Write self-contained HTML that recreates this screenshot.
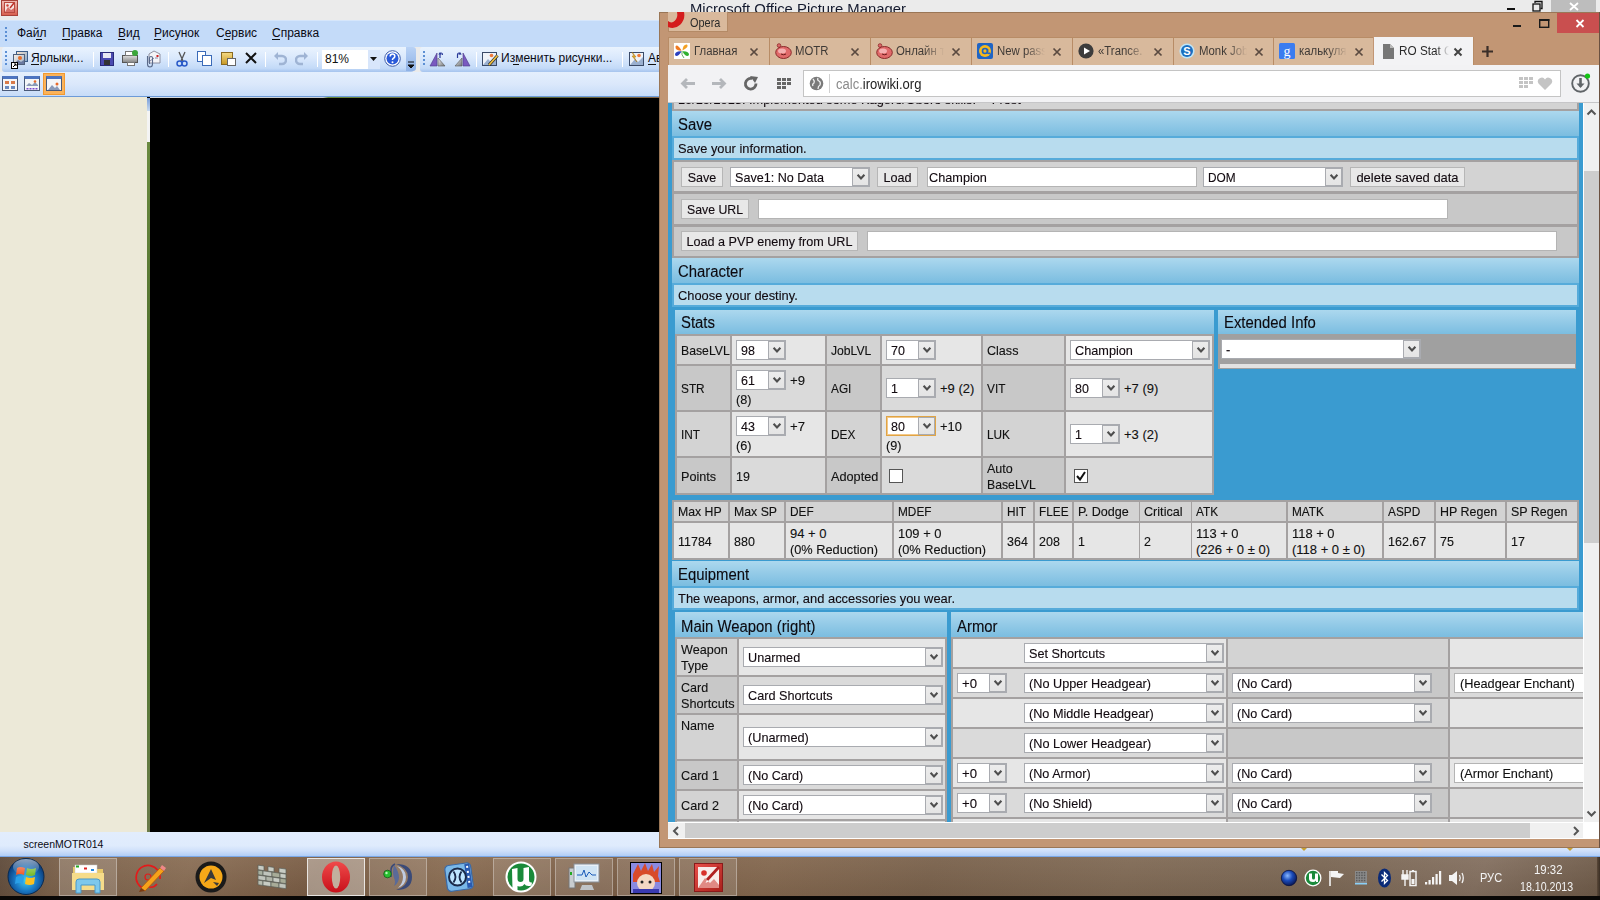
<!DOCTYPE html>
<html><head><meta charset="utf-8">
<style>
*{box-sizing:border-box;margin:0;padding:0}
html,body{width:1600px;height:900px;overflow:hidden;background:#ebebeb;font-family:"Liberation Sans",sans-serif;position:relative}
div,svg{position:absolute}
.t{white-space:nowrap}
.pg .t{-webkit-text-stroke:0.12px currentColor}
</style></head><body>

<div style="left:0px;top:0px;width:1600px;height:20px;background:#ebebeb;"></div>
<div style="left:1px;top:0px;width:17px;height:16px;background:linear-gradient(#f0b8b0,#d86050);border:1px solid #a8423a;"></div>
<svg style="left:4px;top:2px" width="11" height="11" viewBox="0 0 11 11"><rect x=".5" y=".5" width="10" height="10" fill="#f6e4e0" stroke="#b84a40"/><path d="M1 10 L4 5 L7 8 L10 6 V10Z" fill="#d8706a"/><path d="M6 6 L10 1" stroke="#c03028" stroke-width="1.5"/><circle cx="3.5" cy="3.5" r="1.2" fill="#d04038"/></svg>
<div class="t" style="left:690px;top:-1.10px;font-size:15px;line-height:19px;color:#141a2e;transform:scaleX(0.990);transform-origin:0 0;">Microsoft Office Picture Manager</div>
<svg style="left:1500px;top:0" width="100" height="12" viewBox="0 0 100 12"><rect x="7" y="8" width="8" height="2" fill="#111"/><rect x="33" y="4" width="7" height="7" fill="none" stroke="#111" stroke-width="1.3"/><path d="M35 3 V1.5 H42 V8.5 H40.5" fill="none" stroke="#111" stroke-width="1.3"/><rect x="51" y="0" width="45" height="12" fill="#bdbdbd"/><path d="M70 3 L78 10 M78 3 L70 10" stroke="#fff" stroke-width="1.8"/></svg>
<div style="left:0px;top:20px;width:660px;height:27px;background:#c4dbf9;border-top:1px solid #d6e6fb;"></div>
<div style="left:5px;top:27px;width:2px;height:2px;background:#5c8fd4;"></div>
<div style="left:5px;top:31px;width:2px;height:2px;background:#5c8fd4;"></div>
<div style="left:5px;top:35px;width:2px;height:2px;background:#5c8fd4;"></div>
<div style="left:5px;top:39px;width:2px;height:2px;background:#5c8fd4;"></div>
<div class="t" style="left:17px;top:25.94px;font-size:12px;line-height:15px;color:#0a0a14;">Файл</div>
<div class="t" style="left:62px;top:25.94px;font-size:12px;line-height:15px;color:#0a0a14;">Правка</div>
<div class="t" style="left:118px;top:25.94px;font-size:12px;line-height:15px;color:#0a0a14;">Вид</div>
<div class="t" style="left:154px;top:25.94px;font-size:12px;line-height:15px;color:#0a0a14;">Рисунок</div>
<div class="t" style="left:216px;top:25.94px;font-size:12px;line-height:15px;color:#0a0a14;">Сервис</div>
<div class="t" style="left:272px;top:25.94px;font-size:12px;line-height:15px;color:#0a0a14;">Справка</div>
<div style="left:36px;top:39px;width:6px;height:1px;background:#111;"></div>
<div style="left:62px;top:39px;width:8px;height:1px;background:#111;"></div>
<div style="left:118px;top:39px;width:7px;height:1px;background:#111;"></div>
<div style="left:154px;top:39px;width:7px;height:1px;background:#111;"></div>
<div style="left:224px;top:39px;width:6px;height:1px;background:#111;"></div>
<div style="left:272px;top:39px;width:8px;height:1px;background:#111;"></div>
<div style="left:2px;top:47px;width:412px;height:25px;background:linear-gradient(#eaf3fe,#d9e8fc 45%,#c3daf8 85%,#a6c4ee);border-radius:3px;"></div>
<div style="left:406px;top:47px;width:10px;height:24px;background:linear-gradient(#b9d2f5,#8fb2e6);border-radius:0 3px 3px 0;"></div>
<svg style="left:406px;top:60px" width="10" height="10"><path d="M2 2H8M2 5L5 8L8 5Z" stroke="#111" fill="#111" stroke-width="1"/></svg>
<div style="left:420px;top:47px;width:240px;height:25px;background:linear-gradient(#eaf3fe,#d9e8fc 45%,#c3daf8 85%,#a6c4ee);border-radius:3px 0 0 3px;"></div>
<div style="left:5px;top:51px;width:2px;height:2px;background:#5c8fd4;"></div>
<div style="left:5px;top:55px;width:2px;height:2px;background:#5c8fd4;"></div>
<div style="left:5px;top:59px;width:2px;height:2px;background:#5c8fd4;"></div>
<div style="left:5px;top:63px;width:2px;height:2px;background:#5c8fd4;"></div>
<div style="left:423px;top:51px;width:2px;height:2px;background:#5c8fd4;"></div>
<div style="left:423px;top:55px;width:2px;height:2px;background:#5c8fd4;"></div>
<div style="left:423px;top:59px;width:2px;height:2px;background:#5c8fd4;"></div>
<div style="left:423px;top:63px;width:2px;height:2px;background:#5c8fd4;"></div>
<div style="left:16px;top:51px;width:12px;height:11px;background:linear-gradient(135deg,#fbe6d0,#8aa8c8);border:1px solid #3d5f8a;"></div>
<div style="left:13px;top:54px;width:12px;height:11px;background:linear-gradient(135deg,#f8f0e8,#9ab0c8);border:1px solid #50607a;"></div>
<svg style="left:14px;top:55px" width="10" height="9" viewBox="0 0 10 9"><circle cx="6" cy="3" r="2" fill="#e8702a"/><path d="M0 9 L4 5 L7 7 L10 5 V9Z" fill="#6a7aa0"/></svg>
<div style="left:11px;top:62px;width:7px;height:7px;background:#fff;border:1px solid #000;"></div>
<svg style="left:12px;top:63px" width="5" height="5"><path d="M1 4 L4 1 M2 1 H4 V3" stroke="#000" fill="none"/></svg>
<div class="t" style="left:31px;top:51.44px;font-size:12px;line-height:15px;color:#0a0a14;">Ярлыки...</div>
<div style="left:31px;top:64px;width:8px;height:1px;background:#111;"></div>
<div style="left:93px;top:52px;width:1px;height:15px;background:#8fb0dc;border-right:1px solid #fff;"></div>
<div style="left:168px;top:52px;width:1px;height:15px;background:#8fb0dc;border-right:1px solid #fff;"></div>
<div style="left:265px;top:52px;width:1px;height:15px;background:#8fb0dc;border-right:1px solid #fff;"></div>
<div style="left:317px;top:52px;width:1px;height:15px;background:#8fb0dc;border-right:1px solid #fff;"></div>
<div style="left:476px;top:52px;width:1px;height:15px;background:#8fb0dc;border-right:1px solid #fff;"></div>
<div style="left:622px;top:52px;width:1px;height:15px;background:#8fb0dc;border-right:1px solid #fff;"></div>
<div style="left:100px;top:52px;width:14px;height:14px;background:#4a4ab0;border:1px solid #2a2a7a;"></div>
<div style="left:103px;top:53px;width:8px;height:5px;background:#e8e8f4;"></div>
<div style="left:104px;top:60px;width:6px;height:5px;background:#333;"></div>
<div style="left:122px;top:55px;width:16px;height:8px;background:linear-gradient(#d8d8d8,#8a8a8a);border:1px solid #555;"></div>
<div style="left:125px;top:51px;width:10px;height:5px;background:#fff;border:1px solid #777;"></div>
<div style="left:127px;top:62px;width:8px;height:4px;background:#fff;border:1px solid #777;"></div>
<div style="left:132px;top:50px;width:6px;height:6px;background:#3aa63a;border-radius:3px;"></div>
<svg style="left:144px;top:50px" width="18" height="18" viewBox="0 0 18 18"><path d="M5 4 L10 1 L16 4 V13 H5Z" fill="#f4f4f8" stroke="#7a7a8a" stroke-width=".8"/><path d="M6 11 L10 8 M11 8 H14" stroke="#8a8aa8"/><rect x="12.5" y="5" width="2" height="2" fill="#d02020"/><path d="M3.5 6 V14 Q3.5 17 6 17 Q8.5 17 8.5 14 V8 Q8.5 6.5 7 6.5 Q5.5 6.5 5.5 8 V14" fill="none" stroke="#5a6a8a" stroke-width="1.1"/></svg>
<svg style="left:176px;top:51px" width="12" height="16"><path d="M3 1 L7 10 M9 1 L5 10" stroke="#555" stroke-width="1.3"/><circle cx="3.5" cy="12.5" r="2.5" fill="none" stroke="#2a5ac8" stroke-width="1.5"/><circle cx="8.5" cy="12.5" r="2.5" fill="none" stroke="#2a5ac8" stroke-width="1.5"/></svg>
<div style="left:197px;top:51px;width:9px;height:11px;background:#fff;border:1px solid #3a6ab8;"></div>
<div style="left:202px;top:55px;width:10px;height:11px;background:#fff;border:1px solid #3a6ab8;"></div>
<div style="left:221px;top:52px;width:12px;height:13px;background:linear-gradient(#f4d880,#c89a28);border:1px solid #8a6a20;"></div>
<div style="left:227px;top:58px;width:9px;height:8px;background:#fff;border:1px solid #666;"></div>
<svg style="left:244px;top:51px" width="14" height="14"><path d="M2 2 L12 12 M12 2 L2 12" stroke="#111" stroke-width="2"/></svg>
<svg style="left:273px;top:52px" width="14" height="14"><path d="M4 4 H9 A4 4 0 0 1 9 12 H6" fill="none" stroke="#9fb4d4" stroke-width="2.5"/><path d="M1 4 L5 0 V8Z" fill="#9fb4d4"/></svg>
<svg style="left:295px;top:52px" width="14" height="14"><path d="M10 4 H5 A4 4 0 0 0 5 12 H8" fill="none" stroke="#9fb4d4" stroke-width="2.5"/><path d="M13 4 L9 0 V8Z" fill="#9fb4d4"/></svg>
<div style="left:322px;top:50px;width:58px;height:19px;background:#fff;"></div>
<div style="left:368px;top:50px;width:12px;height:19px;background:#d8e6fb;"></div>
<svg style="left:369px;top:56px" width="9" height="6"><path d="M1 1H8L4.5 5Z" fill="#111"/></svg>
<div class="t" style="left:325px;top:51.94px;font-size:12px;line-height:15px;color:#111;">81%</div>
<svg style="left:384px;top:50px" width="17" height="17" viewBox="0 0 17 17"><circle cx="8.5" cy="8.5" r="7.8" fill="#fff" stroke="#3a5aa8" stroke-width="1"/><circle cx="8.5" cy="8.5" r="6" fill="#2a5ad8"/><path d="M6.2 6.5 Q6.2 4 8.5 4 Q10.8 4 10.8 6.2 Q10.8 7.6 9.2 8.4 Q8.5 8.8 8.5 10" fill="none" stroke="#fff" stroke-width="1.6"/><circle cx="8.5" cy="12.3" r="1" fill="#fff"/></svg>
<svg style="left:429px;top:51px" width="42" height="16" viewBox="0 0 42 16"><defs><linearGradient id="rg" x1="0" y1="0" x2="1" y2="1"><stop offset="0" stop-color="#f4f4f4"/><stop offset="1" stop-color="#707478"/></linearGradient></defs><path d="M1 15 L8 2 V15Z" fill="#7a5ac0" stroke="#4a3a88" stroke-width=".6"/><path d="M9 15 V7 L16 15Z" fill="url(#rg)" stroke="#555" stroke-width=".6"/><path d="M11 7 V3.5 Q11 2 12.5 2 Q13.5 2 13.5 4" fill="none" stroke="#2a3a98" stroke-width="1.2"/><path d="M9.3 3.5 L11 1 L12.7 3.5Z" fill="#2a3a98"/><path d="M41 15 L34 2 V15Z" fill="#7a5ac0" stroke="#4a3a88" stroke-width=".6"/><path d="M33 15 V7 L26 15Z" fill="url(#rg)" stroke="#555" stroke-width=".6"/><path d="M28.5 7 V4 Q28.5 2 30 2 Q31 2 31 3.5" fill="none" stroke="#2a3a98" stroke-width="1.2"/><path d="M29.3 3.5 L31 1 L32.7 3.5Z" fill="#2a3a98"/></svg>
<svg style="left:482px;top:51px" width="17" height="16" viewBox="0 0 17 16"><rect x=".5" y="1.5" width="14" height="13" fill="#eef2f8" stroke="#3a4a68"/><path d="M1 14 L6 8 L9 11 L14 6 V14Z" fill="#9ab0d0"/><circle cx="9.5" cy="4.5" r="1.8" fill="#f07a3a"/><path d="M7 14 L15.5 4.5" stroke="#2a2a2a" stroke-width="3"/><path d="M7 14 L15.5 4.5" stroke="#f0c040" stroke-width="1.8"/></svg>
<div class="t" style="left:501px;top:51.44px;font-size:12px;line-height:15px;color:#0a0a14;">Изменить рисунки...</div>
<div style="left:513px;top:64px;width:6px;height:1px;background:#111;"></div>
<svg style="left:629px;top:51px" width="16" height="16" viewBox="0 0 16 16"><rect x=".5" y="1.5" width="14" height="13" fill="#eef2f8" stroke="#3a4a68"/><path d="M1 14 L6 8 L9 11 L14 6 V14Z" fill="#9ab0d0"/><path d="M3 1 L7 6 L5 6 L8 11 L3 5 L5 5Z" fill="#f0b020" stroke="#a07010" stroke-width=".5"/><circle cx="10" cy="4.5" r="1.8" fill="#f07a3a"/></svg>
<div class="t" style="left:648px;top:51.44px;font-size:12px;line-height:15px;color:#0a0a14;">Ав</div>
<div style="left:648px;top:64px;width:8px;height:1px;background:#111;"></div>
<div style="left:0px;top:72px;width:660px;height:25px;background:linear-gradient(#e4effd,#dbe8fb 50%,#c7dcf8);border-bottom:1px solid #6d9bd8;"></div>
<div style="left:2px;top:76px;width:16px;height:15px;background:#f4f6f8;border:1px solid #4a5a78;border-top:3px solid #4d74c0;"></div>
<div style="left:5px;top:81px;width:4px;height:3px;background:#d87a4a;"></div>
<div style="left:11px;top:81px;width:4px;height:3px;background:#d87a4a;"></div>
<div style="left:5px;top:86px;width:4px;height:3px;background:#6a8ac0;"></div>
<div style="left:11px;top:86px;width:4px;height:3px;background:#6a8ac0;"></div>
<div style="left:24px;top:76px;width:16px;height:15px;background:#f4f6f8;border:1px solid #4a5a78;border-top:3px solid #4d74c0;"></div>
<svg style="left:26px;top:80px" width="12" height="10" viewBox="0 0 12 10"><path d="M0 6 L3 3 L6 5 L9 2 L12 5 V6Z" fill="#8a9ab8"/><circle cx="9" cy="1.5" r="1.3" fill="#e86a2a"/><rect x="0.5" y="8" width="2" height="1.5" fill="#7a4ad0"/><rect x="3.5" y="8" width="2" height="1.5" fill="#7a4ad0"/><rect x="6.5" y="8" width="2" height="1.5" fill="#7a4ad0"/><rect x="9.5" y="8" width="2" height="1.5" fill="#7a4ad0"/></svg>
<div style="left:43px;top:73px;width:22px;height:22px;background:#fbb35a;border:1px solid #f29a30;"></div>
<div style="left:46px;top:76px;width:16px;height:15px;background:#f4f6f8;border:1px solid #4a5a78;border-top:3px solid #4d74c0;"></div>
<svg style="left:48px;top:82px" width="12" height="8"><path d="M0 8 L4 3 L7 6 L9 4 L12 8Z" fill="#8a9ab8"/><circle cx="9" cy="2" r="1.5" fill="#e86a2a"/></svg>
<div style="left:0px;top:97px;width:147px;height:735px;background:#ece9d8;"></div>
<div style="left:147px;top:97px;width:512px;height:735px;background:#000;"></div>
<div style="left:147px;top:98px;width:3px;height:13px;background:linear-gradient(#7a9ed8,#c8daf0);"></div>
<div style="left:147px;top:111px;width:3px;height:31px;background:#f4f4f4;"></div>
<div style="left:147px;top:142px;width:3px;height:690px;background:linear-gradient(#6a8a40,#4a6a2a 40%,#5a7a3a 80%,#6a7a4a);"></div>
<div style="left:150px;top:97px;width:509px;height:1px;background:linear-gradient(90deg,#d8dce0 0%,#c8ccd0 34%,#6a8a3a 35%,#7a7a4a 55%,#5a6a3a 75%,#8a6a4a 100%);"></div>
<div style="left:0px;top:832px;width:1600px;height:25px;background:linear-gradient(#e2edfd,#dfebfd 55%,#cfe0fa 75%,#b4cff6 94%,#7aa8e8 96%);"></div>
<div class="t" style="left:23.5px;top:838.46px;font-size:10.5px;line-height:13px;color:#0a0a14;">screenMOTR014</div>
<svg style="left:1300px;top:847px" width="8" height="5" viewBox="0 0 8 5"><path d="M0 0 H8 L4 4Z" fill="#c8a030"/></svg>
<svg style="left:1416px;top:847px" width="8" height="5" viewBox="0 0 8 5"><path d="M0 0 H8 L4 4Z" fill="#e8e4dc"/></svg>
<svg style="left:1566px;top:847px" width="8" height="5" viewBox="0 0 8 5"><path d="M0 0 H8 L4 4Z" fill="#c8a030"/></svg>
<div style="left:0px;top:857px;width:1600px;height:39px;background:linear-gradient(180deg,rgba(255,255,255,.05),rgba(0,0,0,.06)),linear-gradient(115deg,#5e4a3a 0%,#7c624b 4%,#8a6e55 12%,#7a5d45 20%,#8b6e54 28%,#7d6048 38%,#84684f 48%,#7a624c 58%,#806a55 70%,#7b6754 82%,#847060 92%,#6e5a48 100%);"></div>
<div style="left:0px;top:896px;width:1600px;height:4px;background:#0a0806;"></div>
<svg style="left:6px;top:857px" width="40" height="39" viewBox="0 0 40 39"><defs><radialGradient id="orb" cx="50%" cy="60%" r="55%"><stop offset="0" stop-color="#3fd0f4"/><stop offset=".55" stop-color="#1a78c4"/><stop offset="1" stop-color="#0a3a78"/></radialGradient><linearGradient id="gl" x1="0" y1="0" x2="0" y2="1"><stop offset="0" stop-color="#fff" stop-opacity=".55"/><stop offset="1" stop-color="#fff" stop-opacity="0"/></linearGradient></defs><circle cx="20" cy="19.5" r="18" fill="url(#orb)" stroke="#0a2a50" stroke-width="1"/><path d="M11 11 Q14 9 19 11 L18 18 Q14 16 10 18Z" fill="#f05a28"/><path d="M21 11 Q25 13 30 11 L29 18 Q25 20 20 18Z" fill="#7cbc30"/><path d="M10 20 Q14 18 18 20 L17 27 Q13 25 9 27Z" fill="#2aa0e8"/><path d="M20 20 Q24 22 29 20 L28 27 Q24 29 19 27Z" fill="#fbc020"/><ellipse cx="20" cy="10" rx="13" ry="8" fill="url(#gl)"/></svg>
<div style="left:59px;top:858px;width:58px;height:38px;background:rgba(255,255,255,0.16);border:1px solid rgba(255,255,255,.32);"></div>
<div style="left:307px;top:858px;width:58px;height:38px;background:rgba(255,255,255,0.35);border:1px solid rgba(255,255,255,.75);"></div>
<div style="left:369px;top:858px;width:58px;height:38px;background:rgba(255,255,255,0.12);border:1px solid rgba(255,255,255,.32);"></div>
<div style="left:493px;top:858px;width:58px;height:38px;background:rgba(255,255,255,0.12);border:1px solid rgba(255,255,255,.32);"></div>
<div style="left:555px;top:858px;width:58px;height:38px;background:rgba(255,255,255,0.12);border:1px solid rgba(255,255,255,.32);"></div>
<div style="left:617px;top:858px;width:58px;height:38px;background:rgba(255,255,255,0.12);border:1px solid rgba(255,255,255,.32);"></div>
<div style="left:679px;top:858px;width:58px;height:38px;background:rgba(255,255,255,0.12);border:1px solid rgba(255,255,255,.32);"></div>
<svg style="left:71px;top:863px" width="34" height="31" viewBox="0 0 34 31"><path d="M2 4 H12 L14 6 H32 V27 H2Z" fill="#e8c868"/><rect x="4" y="2" width="22" height="8" fill="#fff" stroke="#ccc" stroke-width=".5"/><rect x="5" y="2.5" width="3" height="2" fill="#2a2"/><rect x="13" y="4.5" width="3" height="2" fill="#d22"/><rect x="20" y="6" width="3" height="2" fill="#28d"/><path d="M1 10 H33 V27 H1Z" fill="#f6dc8a"/><path d="M5 30 V19 Q5 16 8 16 H26 Q29 16 29 19 V30 H24 V22 H10 V30Z" fill="#7ec8ec" stroke="#4a98c8" stroke-width="1"/></svg>
<svg style="left:133px;top:862px" width="34" height="30" viewBox="0 0 34 30"><path d="M12 27 A12 12 0 1 1 27 17" fill="none" stroke="#e41a1a" stroke-width="1.6"/><path d="M16 25 A8 8 0 0 0 24 22" fill="none" stroke="#e41a1a" stroke-width="1.6"/><circle cx="15" cy="15" r="3" fill="none" stroke="#e41a1a" stroke-width="1.2"/><path d="M8 26 L27 6 L31 9 L12 29Z" fill="#f6a21a" stroke="#b05a10" stroke-width=".8"/><path d="M27 6 L29 3 L33 6 L31 9Z" fill="#e88"/><path d="M8 26 L12 29 L6 30Z" fill="#7a3a10"/></svg>
<svg style="left:195px;top:861px" width="32" height="32" viewBox="0 0 32 32"><circle cx="16" cy="16" r="15.5" fill="#1a1a1a"/><circle cx="16" cy="16" r="11.5" fill="#f6a818"/><path d="M9 22 L16 8 L21 19 L16 17 Z" fill="#3a3a3a"/><path d="M18 21 L24 22 L22 25Z" fill="#3a3a3a"/></svg>
<svg style="left:257px;top:864px" width="32" height="28" viewBox="0 0 32 28"><g transform="skewY(8)"><rect x="1" y="1" width="6" height="4.6" fill="#c8ccc4" stroke="#5a5e58" stroke-width=".7"/><rect x="11" y="1" width="6" height="4.6" fill="#c8ccc4" stroke="#5a5e58" stroke-width=".7"/><rect x="22" y="1" width="7" height="4.6" fill="#c8ccc4" stroke="#5a5e58" stroke-width=".7"/><rect x="1" y="6" width="5" height="4.6" fill="#a8b0a0" stroke="#5a5e58" stroke-width=".7"/><rect x="6" y="6" width="9" height="4.6" fill="#c0c4bc" stroke="#5a5e58" stroke-width=".7"/><rect x="15" y="6" width="8" height="4.6" fill="#a8ac98" stroke="#5a5e58" stroke-width=".7"/><rect x="23" y="6" width="6" height="4.6" fill="#c8ccc4" stroke="#5a5e58" stroke-width=".7"/><rect x="1" y="11" width="8" height="4.6" fill="#c0c4bc" stroke="#5a5e58" stroke-width=".7"/><rect x="9" y="11" width="7" height="4.6" fill="#b0b4a8" stroke="#5a5e58" stroke-width=".7"/><rect x="16" y="11" width="7" height="4.6" fill="#c8ccc4" stroke="#5a5e58" stroke-width=".7"/><rect x="23" y="11" width="6" height="4.6" fill="#a8ac98" stroke="#5a5e58" stroke-width=".7"/><rect x="1" y="16" width="5" height="4.6" fill="#b8bcb0" stroke="#5a5e58" stroke-width=".7"/><rect x="6" y="16" width="8" height="4.6" fill="#c8ccc4" stroke="#5a5e58" stroke-width=".7"/><rect x="14" y="16" width="8" height="4.6" fill="#a8ac98" stroke="#5a5e58" stroke-width=".7"/><rect x="22" y="16" width="7" height="4.6" fill="#c0c4bc" stroke="#5a5e58" stroke-width=".7"/></g></svg>
<svg style="left:321px;top:861px" width="30" height="32" viewBox="0 0 30 32"><defs><linearGradient id="og" x1="0" y1="0" x2="0" y2="1"><stop offset="0" stop-color="#f04a4a"/><stop offset="1" stop-color="#c8101a"/></linearGradient></defs><ellipse cx="15" cy="16" rx="14" ry="15.5" fill="url(#og)"/><ellipse cx="15" cy="16" rx="4.2" ry="11.5" fill="#c2b09e"/></svg>
<svg style="left:381px;top:861px" width="34" height="31" viewBox="0 0 34 31"><path d="M15 3 Q31 3 31 16 Q31 29 15 29 Q27 25 27 16 Q27 7 15 3Z" fill="#3a4a78"/><path d="M16 5 Q25 8 25 16 Q25 24 17 27 Q22 22 22 16 Q22 10 16 5Z" fill="#c0cce0"/><path d="M13 4 Q18 10 18 17 Q17 23 13 25 Q15 21 13 17 Q11 12 13 4Z" fill="#5a6a98"/><path d="M10 16 V9 Q10 5 14 3" stroke="#3a4a78" stroke-width="1.6" fill="none"/><circle cx="6.5" cy="13" r="3.8" fill="#28c030" stroke="#155a18" stroke-width=".8"/><circle cx="5.5" cy="12" r="1.2" fill="#b8f8b8"/></svg>
<svg style="left:444px;top:862px" width="32" height="30" viewBox="0 0 32 30"><g transform="rotate(-8 16 15)"><rect x="2" y="2" width="26" height="26" rx="4" fill="#7ab8e8" stroke="#3a6aa8" stroke-width="1.2"/><rect x="22" y="3" width="5" height="24" fill="#2a5ab0"/><rect x="23.5" y="5" width="2" height="2" fill="#fff"/><rect x="23.5" y="10" width="2" height="2" fill="#fff"/><rect x="23.5" y="15" width="2" height="2" fill="#fff"/><rect x="23.5" y="20" width="2" height="2" fill="#fff"/></g><circle cx="13.5" cy="15" r="8.5" fill="#bfe6ff" stroke="#1a2a4a" stroke-width="2"/><path d="M9.5 9.5 Q13.5 15 9.5 20.5 M17.5 9.5 Q13.5 15 17.5 20.5" stroke="#1a2a4a" stroke-width="1.8" fill="none"/></svg>
<svg style="left:505px;top:861px" width="32" height="32" viewBox="0 0 32 32"><circle cx="16" cy="16" r="15.5" fill="#fff"/><circle cx="16" cy="16" r="13.5" fill="#1a8a3a"/><path d="M7 8 L12.5 7 V18 Q12.5 21 15.5 21 Q18.5 21 18.5 18 V7 L24 6 V19 Q24 22 27 21.5 L26.5 24.5 Q21 26 19.5 23 Q17.5 26 14 25.5 Q13.2 25.4 12.5 25 V30 L7.5 29Z" fill="#fff"/></svg>
<svg style="left:568px;top:863px" width="32" height="30" viewBox="0 0 32 30"><rect x="1" y="5" width="6" height="20" fill="#c8ccd0" stroke="#777"/><rect x="2" y="9" width="2" height="3" fill="#2a2"/><rect x="6" y="1" width="25" height="18" fill="#e8f0f8" stroke="#8a9098"/><rect x="8" y="3" width="21" height="14" fill="#d0e4f4"/><path d="M9 12 L14 12 L16 7 L18 14 L21 9 L24 12 L28 12" stroke="#1a5ab8" fill="none"/><path d="M14 22 H24 L26 27 H12Z" fill="#c0c4c8"/></svg>
<svg style="left:630px;top:862px" width="32" height="32" viewBox="0 0 32 32"><rect x=".5" y=".5" width="31" height="31" fill="#8a8ae0" stroke="#000" stroke-width="1"/><path d="M3 12 L8 2 L11 9 L15 1 L18 9 L22 2 L24 10 L29 4 L28 14 L30 20 L3 20Z" fill="#d84a2a"/><ellipse cx="16" cy="21" rx="9" ry="9" fill="#f4d8c4"/><circle cx="12" cy="20" r="1.5" fill="#222"/><circle cx="20" cy="20" r="1.5" fill="#222"/><rect x="3" y="27" width="26" height="4" fill="#3a3ab0"/></svg>
<svg style="left:694px;top:863px" width="29" height="29" viewBox="0 0 29 29"><defs><linearGradient id="pmg" x1="0" y1="0" x2="1" y2="1"><stop offset="0" stop-color="#e8504a"/><stop offset="1" stop-color="#a8201a"/></linearGradient></defs><rect x=".5" y=".5" width="28" height="28" fill="url(#pmg)" stroke="#8a1a1a"/><rect x="4" y="4" width="21" height="21" fill="#f8ecea"/><path d="M4 25 L11 15 L16 20 L20 16 L25 22 V25Z" fill="#e08a84"/><circle cx="10" cy="10" r="2.8" fill="#d8302a"/><path d="M13 17 L25 4" stroke="#b02020" stroke-width="2.8"/><path d="M13 17 L11.5 20 L14.5 18.5Z" fill="#fff"/></svg>
<svg style="left:1280px;top:868px" width="190" height="22" viewBox="0 0 190 22"><defs><radialGradient id="bb" cx="40%" cy="35%" r="65%"><stop offset="0" stop-color="#8ab8ff"/><stop offset=".5" stop-color="#1a4ab8"/><stop offset="1" stop-color="#0a1a5a"/></radialGradient></defs><circle cx="9" cy="10" r="7.7" fill="url(#bb)" stroke="#061040" stroke-width=".8"/><circle cx="33" cy="10" r="8.5" fill="#fff"/><circle cx="33" cy="10" r="7.2" fill="#1a8a3a"/><path d="M29 5.5 V10.5 Q29 14 33 14 Q35 14 36 12.5 V14 H38 V5.5 H35 V10 Q35 11.5 33.5 11.5 Q32 11.5 32 10 V5.5Z" fill="#fff"/><path d="M50 3 V18" stroke="#f4f4f4" stroke-width="1.6"/><path d="M51 3 H58 L58 5 L64 6 L60 10 L51 9Z" fill="#f4f4f4"/><rect x="75" y="3" width="12" height="12" fill="#8a8a8a"/><rect x="76.0" y="4.0" width="1.5" height="1.5" fill="#5a5a5a"/><rect x="78.6" y="4.0" width="1.5" height="1.5" fill="#5a5a5a"/><rect x="81.2" y="4.0" width="1.5" height="1.5" fill="#5a5a5a"/><rect x="83.8" y="4.0" width="1.5" height="1.5" fill="#5a5a5a"/><rect x="76.0" y="6.6" width="1.5" height="1.5" fill="#5a5a5a"/><rect x="78.6" y="6.6" width="1.5" height="1.5" fill="#5a5a5a"/><rect x="81.2" y="6.6" width="1.5" height="1.5" fill="#5a5a5a"/><rect x="83.8" y="6.6" width="1.5" height="1.5" fill="#5a5a5a"/><rect x="76.0" y="9.2" width="1.5" height="1.5" fill="#5a5a5a"/><rect x="78.6" y="9.2" width="1.5" height="1.5" fill="#5a5a5a"/><rect x="81.2" y="9.2" width="1.5" height="1.5" fill="#5a5a5a"/><rect x="83.8" y="9.2" width="1.5" height="1.5" fill="#5a5a5a"/><rect x="76.0" y="11.8" width="1.5" height="1.5" fill="#5a5a5a"/><rect x="78.6" y="11.8" width="1.5" height="1.5" fill="#5a5a5a"/><rect x="81.2" y="11.8" width="1.5" height="1.5" fill="#5a5a5a"/><rect x="83.8" y="11.8" width="1.5" height="1.5" fill="#5a5a5a"/><rect x="75" y="15" width="12" height="1.5" fill="#8ad0f8"/><ellipse cx="104.5" cy="10" rx="6.5" ry="9.5" fill="#0a2a78"/><path d="M101.5 6.5 L107.5 12.5 L104.5 15.5 V4.5 L107.5 7.5 L101.5 13.5" stroke="#fff" stroke-width="1.3" fill="none"/><path d="M123 2 V7 M127 2 V7 M122 7 H128 V11 H122Z M125 11 V18" stroke="#f4f4f4" stroke-width="1.4" fill="#f4f4f4"/><rect x="130" y="3.5" width="6" height="14" fill="none" stroke="#f4f4f4" stroke-width="1.5"/><rect x="132" y="2" width="2" height="1.5" fill="#f4f4f4"/><rect x="131.5" y="11" width="3" height="5" fill="#f4f4f4"/><rect x="145" y="14" width="2.2" height="2.5" fill="#f4f4f4"/><rect x="148.5" y="12" width="2.2" height="4.5" fill="#f4f4f4"/><rect x="152" y="9" width="2.2" height="7.5" fill="#f4f4f4"/><rect x="155.5" y="6" width="2.2" height="10.5" fill="#f4f4f4"/><rect x="159" y="3" width="2.2" height="13.5" fill="#f4f4f4"/><path d="M169 7 H172 L177 3 V17 L172 13 H169Z" fill="#f4f4f4"/><path d="M179.5 7 Q181 10 179.5 13 M182 5 Q184.5 10 182 15" stroke="#f4f4f4" stroke-width="1.3" fill="none"/></svg>
<div class="t" style="left:1480px;top:870.94px;font-size:12px;line-height:15px;color:#f4f4f4;transform:scaleX(0.920);transform-origin:0 0;">РУС</div>
<div class="t" style="left:1533.5px;top:863.44px;font-size:12px;line-height:15px;color:#f4f4f4;transform:scaleX(0.950);transform-origin:0 0;">19:32</div>
<div class="t" style="left:1519.5px;top:880.44px;font-size:12px;line-height:15px;color:#f4f4f4;transform:scaleX(0.885);transform-origin:0 0;">18.10.2013</div>
<div style="left:1597px;top:857px;width:3px;height:39px;background:linear-gradient(90deg,#5a4838,#3a2e24);"></div>
<div style="left:659px;top:12px;width:941px;height:836px;background:#c29674;border:1px solid #9a7656;"></div>
<div style="left:668px;top:12px;width:60px;height:20px;background:#d9b99c;border:1px solid #b48a66;border-top:none;"></div>
<svg style="left:668px;top:12px" width="17" height="17" viewBox="0 0 17 17"><path d="M0 0 H16 A12 13 0 0 1 0 15 Z" fill="#d41c1c"/><path d="M0 0 H9 A6 8 0 0 1 0 9 Z" fill="#d9b99c"/></svg>
<div class="t" style="left:690px;top:14.59px;font-size:13px;line-height:16px;color:#2a2a2a;transform:scaleX(0.840);transform-origin:0 0;">Opera</div>
<svg style="left:1500px;top:13px" width="100" height="22" viewBox="0 0 100 22"><rect x="13" y="12" width="8" height="2" fill="#1a1a1a"/><rect x="39.7" y="6.7" width="9" height="7.6" fill="none" stroke="#1a1a1a" stroke-width="1.4"/><rect x="39" y="6" width="10.4" height="2" fill="#1a1a1a"/><rect x="57" y="0" width="42" height="20" fill="#c94f4f"/><path d="M76.5 7 L83.5 14 M83.5 7 L76.5 14" stroke="#fff" stroke-width="1.8"/></svg>
<div style="left:1599px;top:12px;width:1px;height:836px;background:#6a5040;"></div>
<div style="left:668px;top:37px;width:101px;height:28px;background:#d8b99c;border-left:1px solid #b88c66;border-top:1px solid #b88c66;"></div>
<svg style="left:674px;top:43px" width="16" height="16" viewBox="0 0 16 16"><rect width="16" height="16" fill="#fff"/><path d="M7.6 7.6 Q1 8 1.5 3.5 Q3 0.5 7.6 7.6Z" fill="#f07a22"/><path d="M8.4 7.6 Q9 1 13 1.5 Q15.5 4 8.4 7.6Z" fill="#f3a024"/><path d="M7.6 8.4 Q1 8 1 12 Q3 15 7.6 8.4Z" fill="#2a40c0"/><path d="M8.4 8.4 Q15 8 15 12 Q12.5 15 8.4 8.4Z" fill="#30b030"/><path d="M8 8 Q7 12 10 15" stroke="#6ab06a" fill="none"/></svg>
<div class="t" style="left:694px;top:43.17px;font-size:12.5px;line-height:16px;color:#3f3a36;width:54px;overflow:hidden;transform:scaleX(0.91);transform-origin:0 0;">Главная</div>
<svg style="left:749px;top:47px" width="10" height="10" viewBox="0 0 10 10"><path d="M1.5 1.5 L8.5 8.5 M8.5 1.5 L1.5 8.5" stroke="#5a4a40" stroke-width="1.7"/></svg>
<div style="left:769px;top:37px;width:101px;height:28px;background:#d8b99c;border-left:1px solid #b88c66;border-top:1px solid #b88c66;"></div>
<svg style="left:775px;top:43px" width="17" height="16" viewBox="0 0 17 16"><ellipse cx="8.5" cy="9.5" rx="7.8" ry="6" fill="#e06a6a" stroke="#8a2a2a" stroke-width="1"/><ellipse cx="7" cy="8" rx="4" ry="2.5" fill="#f4b0b0"/><circle cx="4" cy="2.5" r="1.8" fill="#e06a6a" stroke="#8a2a2a" stroke-width=".8"/><path d="M6 11 Q8.5 12.5 11 11" stroke="#6a1a1a" fill="none"/></svg>
<div class="t" style="left:795px;top:43.17px;font-size:12.5px;line-height:16px;color:#3f3a36;width:54px;overflow:hidden;transform:scaleX(0.91);transform-origin:0 0;">MOTR</div>
<svg style="left:850px;top:47px" width="10" height="10" viewBox="0 0 10 10"><path d="M1.5 1.5 L8.5 8.5 M8.5 1.5 L1.5 8.5" stroke="#5a4a40" stroke-width="1.7"/></svg>
<div style="left:870px;top:37px;width:101px;height:28px;background:#d8b99c;border-left:1px solid #b88c66;border-top:1px solid #b88c66;"></div>
<svg style="left:876px;top:43px" width="17" height="16" viewBox="0 0 17 16"><ellipse cx="8.5" cy="9.5" rx="7.8" ry="6" fill="#e06a6a" stroke="#8a2a2a" stroke-width="1"/><ellipse cx="7" cy="8" rx="4" ry="2.5" fill="#f4b0b0"/><circle cx="4" cy="2.5" r="1.8" fill="#e06a6a" stroke="#8a2a2a" stroke-width=".8"/><path d="M6 11 Q8.5 12.5 11 11" stroke="#6a1a1a" fill="none"/></svg>
<div class="t" style="left:896px;top:43.17px;font-size:12.5px;line-height:16px;color:#3f3a36;width:54px;overflow:hidden;transform:scaleX(0.91);transform-origin:0 0;-webkit-mask-image:linear-gradient(90deg,#000 58%,transparent 98%)">Онлайн т</div>
<svg style="left:951px;top:47px" width="10" height="10" viewBox="0 0 10 10"><path d="M1.5 1.5 L8.5 8.5 M8.5 1.5 L1.5 8.5" stroke="#5a4a40" stroke-width="1.7"/></svg>
<div style="left:971px;top:37px;width:101px;height:28px;background:#d8b99c;border-left:1px solid #b88c66;border-top:1px solid #b88c66;"></div>
<svg style="left:977px;top:43px" width="16" height="16" viewBox="0 0 16 16"><rect width="16" height="16" rx="2" fill="#1f64c4"/><circle cx="8" cy="8" r="6" fill="#f6b81c"/><circle cx="8" cy="8" r="2.5" fill="none" stroke="#1f64c4" stroke-width="1.6"/><path d="M10.5 6 V9.5 Q11 11 13 10" stroke="#1f64c4" stroke-width="1.5" fill="none"/></svg>
<div class="t" style="left:997px;top:43.17px;font-size:12.5px;line-height:16px;color:#3f3a36;width:54px;overflow:hidden;transform:scaleX(0.91);transform-origin:0 0;-webkit-mask-image:linear-gradient(90deg,#000 58%,transparent 98%)">New pass</div>
<svg style="left:1052px;top:47px" width="10" height="10" viewBox="0 0 10 10"><path d="M1.5 1.5 L8.5 8.5 M8.5 1.5 L1.5 8.5" stroke="#5a4a40" stroke-width="1.7"/></svg>
<div style="left:1072px;top:37px;width:101px;height:28px;background:#d8b99c;border-left:1px solid #b88c66;border-top:1px solid #b88c66;"></div>
<svg style="left:1078px;top:43px" width="16" height="16" viewBox="0 0 16 16"><circle cx="8" cy="8" r="7.6" fill="#3c3c3c"/><path d="M6 4.5 L12 8 L6 11.5Z" fill="#fff"/></svg>
<div class="t" style="left:1098px;top:43.17px;font-size:12.5px;line-height:16px;color:#3f3a36;width:54px;overflow:hidden;transform:scaleX(0.91);transform-origin:0 0;-webkit-mask-image:linear-gradient(90deg,#000 58%,transparent 98%)">«Trance.</div>
<svg style="left:1153px;top:47px" width="10" height="10" viewBox="0 0 10 10"><path d="M1.5 1.5 L8.5 8.5 M8.5 1.5 L1.5 8.5" stroke="#5a4a40" stroke-width="1.7"/></svg>
<div style="left:1173px;top:37px;width:101px;height:28px;background:#d8b99c;border-left:1px solid #b88c66;border-top:1px solid #b88c66;"></div>
<svg style="left:1179px;top:43px" width="16" height="16" viewBox="0 0 16 16"><circle cx="8" cy="8" r="7.6" fill="#bfe4f6"/><circle cx="8" cy="8" r="6" fill="#1a6fc0"/><text x="8" y="12.3" text-anchor="middle" font-family="Liberation Sans" font-weight="bold" font-size="11" fill="#fff">S</text></svg>
<div class="t" style="left:1199px;top:43.17px;font-size:12.5px;line-height:16px;color:#3f3a36;width:54px;overflow:hidden;transform:scaleX(0.91);transform-origin:0 0;-webkit-mask-image:linear-gradient(90deg,#000 58%,transparent 98%)">Monk Job</div>
<svg style="left:1254px;top:47px" width="10" height="10" viewBox="0 0 10 10"><path d="M1.5 1.5 L8.5 8.5 M8.5 1.5 L1.5 8.5" stroke="#5a4a40" stroke-width="1.7"/></svg>
<div style="left:1273px;top:37px;width:100px;height:28px;background:#d8b99c;border-left:1px solid #b88c66;border-top:1px solid #b88c66;"></div>
<svg style="left:1279px;top:43px" width="16" height="16" viewBox="0 0 16 16"><rect width="16" height="16" rx="1.5" fill="#3b7cf0"/><text x="8" y="12.5" text-anchor="middle" font-family="Liberation Serif" font-size="14" fill="#fff">g</text></svg>
<div class="t" style="left:1299px;top:43.17px;font-size:12.5px;line-height:16px;color:#3f3a36;width:54px;overflow:hidden;transform:scaleX(0.91);transform-origin:0 0;-webkit-mask-image:linear-gradient(90deg,#000 58%,transparent 98%)">калькуля</div>
<svg style="left:1354px;top:47px" width="10" height="10" viewBox="0 0 10 10"><path d="M1.5 1.5 L8.5 8.5 M8.5 1.5 L1.5 8.5" stroke="#5a4a40" stroke-width="1.7"/></svg>
<div style="left:1374px;top:37px;width:99px;height:29px;background:#f3f3f5;"></div>
<svg style="left:1382px;top:44px" width="14" height="15" viewBox="0 0 14 15"><path d="M1 0 H8 L12 4 V15 H1Z" fill="#777"/><path d="M8 0 V4 H12" fill="#bbb"/></svg>
<div class="t" style="left:1399px;top:42.67px;font-size:12.5px;line-height:16px;color:#2a2a2a;width:56px;overflow:hidden;transform:scaleX(0.94);transform-origin:0 0;-webkit-mask-image:linear-gradient(90deg,#000 72%,transparent 95%)">RO Stat Ca</div>
<svg style="left:1453px;top:47px" width="10" height="10" viewBox="0 0 10 10"><path d="M1.5 1.5 L8.5 8.5 M8.5 1.5 L1.5 8.5" stroke="#444" stroke-width="2"/></svg>
<div style="left:1473px;top:37px;width:1px;height:28px;background:#b88c66;"></div>
<svg style="left:1481px;top:45px" width="13" height="13" viewBox="0 0 13 13"><path d="M6.5 1 V12 M1 6.5 H12" stroke="#3a2e28" stroke-width="2.2"/></svg>
<div style="left:668px;top:65px;width:931px;height:38px;background:#f2f2f4;border-bottom:1px solid #c6c6c8;"></div>
<svg style="left:680px;top:76px" width="112" height="15" viewBox="0 0 112 15"><path d="M3 7.5 H15 M7 3 L2.5 7.5 L7 12" fill="none" stroke="#b4b7bb" stroke-width="2.8"/><path d="M32 7.5 H44 M40 3 L44.5 7.5 L40 12" fill="none" stroke="#b4b7bb" stroke-width="2.8"/><path d="M76 7.5 A5.3 5.3 0 1 1 72 2.6" fill="none" stroke="#666" stroke-width="2.8"/><path d="M70 0 L78 1 L75 7Z" fill="#666"/></svg>
<svg style="left:777px;top:78px" width="15" height="12" viewBox="0 0 15 12"><rect x="0" y="0" width="4" height="3" fill="#666"/><rect x="5" y="0" width="4" height="3" fill="#666"/><rect x="10" y="0" width="4" height="3" fill="#666"/><rect x="0" y="4" width="4" height="3" fill="#666"/><rect x="5" y="4" width="4" height="3" fill="#666"/><rect x="10" y="4" width="4" height="3" fill="#666"/><rect x="0" y="8" width="4" height="3" fill="#666"/><rect x="5" y="8" width="4" height="3" fill="#666"/></svg>
<div style="left:803px;top:70px;width:758px;height:27px;background:#fff;border:1px solid #c4c4c4;"></div>
<svg style="left:809px;top:76px" width="15" height="15" viewBox="0 0 15 15"><circle cx="7.5" cy="7.5" r="6.8" fill="#7a7a7a"/><path d="M4 3 Q6 5 5 7 Q3 8 4 10 M9 2 Q8 4 10 5 Q12 6 11 9 Q9 10 9 13" fill="none" stroke="#eee" stroke-width="1.3"/></svg>
<div style="left:829px;top:74px;width:1px;height:19px;background:#d0d0d0;"></div>
<div class="t" style="left:836px;top:75.15px;font-size:14px;line-height:18px;color:#222;transform:scaleX(0.93);transform-origin:0 0"><span style="color:#8a8a8a">calc.</span>irowiki.org</div>
<svg style="left:1519px;top:77px" width="34" height="14" viewBox="0 0 34 14"><rect x="0" y="0" width="4" height="3" fill="#c4c4c4"/><rect x="5" y="0" width="4" height="3" fill="#c4c4c4"/><rect x="10" y="0" width="4" height="3" fill="#c4c4c4"/><rect x="0" y="4" width="4" height="3" fill="#c4c4c4"/><rect x="5" y="4" width="4" height="3" fill="#c4c4c4"/><rect x="10" y="4" width="4" height="3" fill="#c4c4c4"/><rect x="0" y="8" width="4" height="3" fill="#c4c4c4"/><rect x="5" y="8" width="4" height="3" fill="#c4c4c4"/><path d="M26 13 L19.5 6.5 A3.4 3.4 0 0 1 26 2.5 A3.4 3.4 0 0 1 32.5 6.5Z" fill="#c4c4c4"/></svg>
<svg style="left:1570px;top:72px" width="22" height="22" viewBox="0 0 22 22"><circle cx="10.5" cy="11.5" r="8.3" fill="none" stroke="#606468" stroke-width="1.9"/><path d="M10.5 6 V14.5" fill="none" stroke="#606468" stroke-width="2.6"/><path d="M6.5 11.5 L10.5 16 L14.5 11.5Z" fill="#606468"/><circle cx="17.5" cy="4" r="2.6" fill="#14c414"/></svg>
<div style="left:668px;top:103px;width:915px;height:719px;background:#3a9bd0;"></div>
<div class="pg" style="left:0;top:0;width:1583px;height:822px;overflow:hidden;clip-path:inset(103px 0 0 668px)">
<div style="left:672px;top:90px;width:907px;height:21px;background:#d3d3d3;border:2px solid #a4a1a1;border-top:none;"></div>
<div class="t" style="left:678px;top:92.09px;font-size:13px;line-height:16px;color:#120a10;transform:scaleX(0.982);transform-origin:0 0;">10/10/2013: Implemented some Kagero/Oboro skills. -- Frost</div>
<div style="left:672px;top:111px;width:907px;height:49px;background:#56abda;"></div>
<div style="left:672px;top:111px;width:907px;height:25px;background:linear-gradient(#acd8ee,#93cae7 50%,#7bbde0);"></div>
<div class="t" style="left:678px;top:115.05px;font-size:16px;line-height:20px;color:#0c0a10;transform:scaleX(0.930);transform-origin:0 0;">Save</div>
<div style="left:674px;top:138px;width:903px;height:20px;background:#b8dcee;"></div>
<div class="t" style="left:678px;top:141.09px;font-size:13px;line-height:16px;color:#120a10;transform:scaleX(0.989);transform-origin:0 0;">Save your information.</div>
<div style="left:672px;top:160px;width:907px;height:98px;background:#a4a1a1;"></div>
<div style="left:674px;top:162px;width:903px;height:29px;background:#d3d3d3;"></div>
<div style="left:674px;top:194px;width:903px;height:30px;background:#c8c8c8;"></div>
<div style="left:674px;top:227px;width:903px;height:29px;background:#c8c8c8;"></div>
<div style="left:681px;top:167px;width:42px;height:20px;background:#e8e8e8;border:1px solid #b6b6b6;"></div>
<div class="t" style="left:681px;width:42px;text-align:center;top:170.09px;font-size:13px;line-height:16px;color:#120a10;transform:scaleX(0.967)">Save</div>
<div style="left:730px;top:167px;width:140px;height:20px;background:#fff;border:1px solid #a9abb0;"></div>
<div style="left:852px;top:168px;width:17px;height:18px;background:linear-gradient(#ececec,#e4e4e4);border:1px solid #a9abb0;"></div>
<svg style="left:855.5px;top:173.0px" width="10" height="8" viewBox="0 0 10 8"><path d="M1.6 1.8 L5 5.4 L8.4 1.8" fill="none" stroke="#4e4e4e" stroke-width="2.1"/></svg>
<div class="t" style="left:735px;top:170.09px;font-size:13px;line-height:16px;color:#120a10;transform:scaleX(0.969);transform-origin:0 0;">Save1: No Data</div>
<div style="left:877px;top:167px;width:41px;height:20px;background:#e8e8e8;border:1px solid #b6b6b6;"></div>
<div class="t" style="left:877px;width:41px;text-align:center;top:170.09px;font-size:13px;line-height:16px;color:#120a10;transform:scaleX(0.970)">Load</div>
<div style="left:927px;top:167px;width:270px;height:20px;background:#fff;border:1px solid #b4b4b4;"></div>
<div class="t" style="left:929px;top:170.09px;font-size:13px;line-height:16px;color:#120a10;transform:scaleX(0.977);transform-origin:0 0;">Champion</div>
<div style="left:1203px;top:167px;width:140px;height:20px;background:#fff;border:1px solid #a9abb0;"></div>
<div style="left:1325px;top:168px;width:17px;height:18px;background:linear-gradient(#ececec,#e4e4e4);border:1px solid #a9abb0;"></div>
<svg style="left:1328.5px;top:173.0px" width="10" height="8" viewBox="0 0 10 8"><path d="M1.6 1.8 L5 5.4 L8.4 1.8" fill="none" stroke="#4e4e4e" stroke-width="2.1"/></svg>
<div class="t" style="left:1208px;top:170.09px;font-size:13px;line-height:16px;color:#120a10;transform:scaleX(0.910);transform-origin:0 0;">DOM</div>
<div style="left:1350px;top:167px;width:115px;height:20px;background:#e8e8e8;border:1px solid #b6b6b6;"></div>
<div class="t" style="left:1350px;width:115px;text-align:center;top:170.09px;font-size:13px;line-height:16px;color:#120a10;transform:scaleX(0.995)">delete saved data</div>
<div style="left:681px;top:199px;width:68px;height:20px;background:#e8e8e8;border:1px solid #b6b6b6;"></div>
<div class="t" style="left:681px;width:68px;text-align:center;top:202.09px;font-size:13px;line-height:16px;color:#120a10;transform:scaleX(0.947)">Save URL</div>
<div style="left:758px;top:199px;width:690px;height:20px;background:#fff;border:1px solid #b4b4b4;"></div>
<div style="left:681px;top:231px;width:177px;height:20px;background:#e8e8e8;border:1px solid #b6b6b6;"></div>
<div class="t" style="left:681px;width:177px;text-align:center;top:234.09px;font-size:13px;line-height:16px;color:#120a10;transform:scaleX(0.970)">Load a PVP enemy from URL</div>
<div style="left:867px;top:231px;width:690px;height:20px;background:#fff;border:1px solid #b4b4b4;"></div>
<div style="left:672px;top:258px;width:907px;height:49px;background:#56abda;"></div>
<div style="left:672px;top:258px;width:907px;height:25px;background:linear-gradient(#acd8ee,#93cae7 50%,#7bbde0);"></div>
<div class="t" style="left:678px;top:262.05px;font-size:16px;line-height:20px;color:#0c0a10;transform:scaleX(0.930);transform-origin:0 0;">Character</div>
<div style="left:674px;top:285px;width:903px;height:20px;background:#b8dcee;"></div>
<div class="t" style="left:678px;top:288.09px;font-size:13px;line-height:16px;color:#120a10;transform:scaleX(0.988);transform-origin:0 0;">Choose your destiny.</div>
<div style="left:675px;top:310px;width:539px;height:24px;background:linear-gradient(#acd8ee,#93cae7 50%,#7bbde0);"></div>
<div class="t" style="left:681px;top:313.05px;font-size:16px;line-height:20px;color:#0c0a10;transform:scaleX(0.930);transform-origin:0 0;">Stats</div>
<div style="left:675px;top:334px;width:539px;height:161px;background:#a4a1a1;"></div>
<div style="left:677px;top:336px;width:53px;height:28px;background:#d3d3d3;"></div>
<div style="left:732px;top:336px;width:93px;height:28px;background:#e6e6e6;"></div>
<div style="left:827px;top:336px;width:53px;height:28px;background:#d3d3d3;"></div>
<div style="left:882px;top:336px;width:99px;height:28px;background:#e6e6e6;"></div>
<div style="left:983px;top:336px;width:81px;height:28px;background:#d3d3d3;"></div>
<div style="left:1066px;top:336px;width:146px;height:28px;background:#e6e6e6;"></div>
<div style="left:677px;top:366px;width:53px;height:44px;background:#c8c8c8;"></div>
<div style="left:732px;top:366px;width:93px;height:44px;background:#dadada;"></div>
<div style="left:827px;top:366px;width:53px;height:44px;background:#c8c8c8;"></div>
<div style="left:882px;top:366px;width:99px;height:44px;background:#dadada;"></div>
<div style="left:983px;top:366px;width:81px;height:44px;background:#c8c8c8;"></div>
<div style="left:1066px;top:366px;width:146px;height:44px;background:#dadada;"></div>
<div style="left:677px;top:412px;width:53px;height:44px;background:#d3d3d3;"></div>
<div style="left:732px;top:412px;width:93px;height:44px;background:#e6e6e6;"></div>
<div style="left:827px;top:412px;width:53px;height:44px;background:#d3d3d3;"></div>
<div style="left:882px;top:412px;width:99px;height:44px;background:#e6e6e6;"></div>
<div style="left:983px;top:412px;width:81px;height:44px;background:#d3d3d3;"></div>
<div style="left:1066px;top:412px;width:146px;height:44px;background:#e6e6e6;"></div>
<div style="left:677px;top:458px;width:53px;height:35px;background:#c8c8c8;"></div>
<div style="left:732px;top:458px;width:93px;height:35px;background:#dadada;"></div>
<div style="left:827px;top:458px;width:53px;height:35px;background:#c8c8c8;"></div>
<div style="left:882px;top:458px;width:99px;height:35px;background:#dadada;"></div>
<div style="left:983px;top:458px;width:81px;height:35px;background:#c8c8c8;"></div>
<div style="left:1066px;top:458px;width:146px;height:35px;background:#dadada;"></div>
<div class="t" style="left:681px;top:343.09px;font-size:13px;line-height:16px;color:#111;transform:scaleX(0.942);transform-origin:0 0;">BaseLVL</div>
<div class="t" style="left:831px;top:343.09px;font-size:13px;line-height:16px;color:#111;transform:scaleX(0.936);transform-origin:0 0;">JobLVL</div>
<div class="t" style="left:987px;top:343.09px;font-size:13px;line-height:16px;color:#111;transform:scaleX(0.967);transform-origin:0 0;">Class</div>
<div style="left:736px;top:340px;width:50px;height:20px;background:#fff;border:1px solid #a9abb0;"></div>
<div style="left:768px;top:341px;width:17px;height:18px;background:linear-gradient(#ececec,#e4e4e4);border:1px solid #a9abb0;"></div>
<svg style="left:771.5px;top:346.0px" width="10" height="8" viewBox="0 0 10 8"><path d="M1.6 1.8 L5 5.4 L8.4 1.8" fill="none" stroke="#4e4e4e" stroke-width="2.1"/></svg>
<div class="t" style="left:741px;top:343.09px;font-size:13px;line-height:16px;color:#120a10;transform:scaleX(0.960);transform-origin:0 0;">98</div>
<div style="left:886px;top:340px;width:50px;height:20px;background:#fff;border:1px solid #a9abb0;"></div>
<div style="left:918px;top:341px;width:17px;height:18px;background:linear-gradient(#ececec,#e4e4e4);border:1px solid #a9abb0;"></div>
<svg style="left:921.5px;top:346.0px" width="10" height="8" viewBox="0 0 10 8"><path d="M1.6 1.8 L5 5.4 L8.4 1.8" fill="none" stroke="#4e4e4e" stroke-width="2.1"/></svg>
<div class="t" style="left:891px;top:343.09px;font-size:13px;line-height:16px;color:#120a10;transform:scaleX(0.960);transform-origin:0 0;">70</div>
<div style="left:1070px;top:340px;width:140px;height:20px;background:#fff;border:1px solid #a9abb0;"></div>
<div style="left:1192px;top:341px;width:17px;height:18px;background:linear-gradient(#ececec,#e4e4e4);border:1px solid #a9abb0;"></div>
<svg style="left:1195.5px;top:346.0px" width="10" height="8" viewBox="0 0 10 8"><path d="M1.6 1.8 L5 5.4 L8.4 1.8" fill="none" stroke="#4e4e4e" stroke-width="2.1"/></svg>
<div class="t" style="left:1075px;top:343.09px;font-size:13px;line-height:16px;color:#120a10;transform:scaleX(0.977);transform-origin:0 0;">Champion</div>
<div class="t" style="left:681px;top:381.09px;font-size:13px;line-height:16px;color:#111;transform:scaleX(0.910);transform-origin:0 0;">STR</div>
<div class="t" style="left:831px;top:381.09px;font-size:13px;line-height:16px;color:#111;transform:scaleX(0.910);transform-origin:0 0;">AGI</div>
<div class="t" style="left:987px;top:381.09px;font-size:13px;line-height:16px;color:#111;transform:scaleX(0.910);transform-origin:0 0;">VIT</div>
<div style="left:736px;top:370px;width:50px;height:20px;background:#fff;border:1px solid #a9abb0;"></div>
<div style="left:768px;top:371px;width:17px;height:18px;background:linear-gradient(#ececec,#e4e4e4);border:1px solid #a9abb0;"></div>
<svg style="left:771.5px;top:376.0px" width="10" height="8" viewBox="0 0 10 8"><path d="M1.6 1.8 L5 5.4 L8.4 1.8" fill="none" stroke="#4e4e4e" stroke-width="2.1"/></svg>
<div class="t" style="left:741px;top:373.09px;font-size:13px;line-height:16px;color:#120a10;transform:scaleX(0.960);transform-origin:0 0;">61</div>
<div class="t" style="left:790px;top:373.09px;font-size:13px;line-height:16px;color:#111;transform:scaleX(1.011);transform-origin:0 0;">+9</div>
<div class="t" style="left:736px;top:392.09px;font-size:13px;line-height:16px;color:#111;transform:scaleX(0.976);transform-origin:0 0;">(8)</div>
<div style="left:886px;top:378px;width:50px;height:20px;background:#fff;border:1px solid #a9abb0;"></div>
<div style="left:918px;top:379px;width:17px;height:18px;background:linear-gradient(#ececec,#e4e4e4);border:1px solid #a9abb0;"></div>
<svg style="left:921.5px;top:384.0px" width="10" height="8" viewBox="0 0 10 8"><path d="M1.6 1.8 L5 5.4 L8.4 1.8" fill="none" stroke="#4e4e4e" stroke-width="2.1"/></svg>
<div class="t" style="left:891px;top:381.09px;font-size:13px;line-height:16px;color:#120a10;transform:scaleX(0.960);transform-origin:0 0;">1</div>
<div class="t" style="left:940px;top:381.09px;font-size:13px;line-height:16px;color:#111;">+9 (2)</div>
<div style="left:1070px;top:378px;width:50px;height:20px;background:#fff;border:1px solid #a9abb0;"></div>
<div style="left:1102px;top:379px;width:17px;height:18px;background:linear-gradient(#ececec,#e4e4e4);border:1px solid #a9abb0;"></div>
<svg style="left:1105.5px;top:384.0px" width="10" height="8" viewBox="0 0 10 8"><path d="M1.6 1.8 L5 5.4 L8.4 1.8" fill="none" stroke="#4e4e4e" stroke-width="2.1"/></svg>
<div class="t" style="left:1075px;top:381.09px;font-size:13px;line-height:16px;color:#120a10;transform:scaleX(0.960);transform-origin:0 0;">80</div>
<div class="t" style="left:1124px;top:381.09px;font-size:13px;line-height:16px;color:#111;">+7 (9)</div>
<div class="t" style="left:681px;top:427.09px;font-size:13px;line-height:16px;color:#111;transform:scaleX(0.910);transform-origin:0 0;">INT</div>
<div class="t" style="left:831px;top:427.09px;font-size:13px;line-height:16px;color:#111;transform:scaleX(0.910);transform-origin:0 0;">DEX</div>
<div class="t" style="left:987px;top:427.09px;font-size:13px;line-height:16px;color:#111;transform:scaleX(0.910);transform-origin:0 0;">LUK</div>
<div style="left:736px;top:416px;width:50px;height:20px;background:#fff;border:1px solid #a9abb0;"></div>
<div style="left:768px;top:417px;width:17px;height:18px;background:linear-gradient(#ececec,#e4e4e4);border:1px solid #a9abb0;"></div>
<svg style="left:771.5px;top:422.0px" width="10" height="8" viewBox="0 0 10 8"><path d="M1.6 1.8 L5 5.4 L8.4 1.8" fill="none" stroke="#4e4e4e" stroke-width="2.1"/></svg>
<div class="t" style="left:741px;top:419.09px;font-size:13px;line-height:16px;color:#120a10;transform:scaleX(0.960);transform-origin:0 0;">43</div>
<div class="t" style="left:790px;top:419.09px;font-size:13px;line-height:16px;color:#111;transform:scaleX(1.011);transform-origin:0 0;">+7</div>
<div class="t" style="left:736px;top:438.09px;font-size:13px;line-height:16px;color:#111;transform:scaleX(0.976);transform-origin:0 0;">(6)</div>
<div style="left:886px;top:416px;width:50px;height:20px;background:#fff;border:1px solid #e0a445;box-shadow:0 0 0 1px #f4c888 inset;"></div>
<div style="left:918px;top:417px;width:17px;height:18px;background:linear-gradient(#ececec,#e4e4e4);border:1px solid #a9abb0;"></div>
<svg style="left:921.5px;top:422.0px" width="10" height="8" viewBox="0 0 10 8"><path d="M1.6 1.8 L5 5.4 L8.4 1.8" fill="none" stroke="#4e4e4e" stroke-width="2.1"/></svg>
<div class="t" style="left:891px;top:419.09px;font-size:13px;line-height:16px;color:#120a10;transform:scaleX(0.960);transform-origin:0 0;">80</div>
<div class="t" style="left:940px;top:419.09px;font-size:13px;line-height:16px;color:#111;transform:scaleX(0.994);transform-origin:0 0;">+10</div>
<div class="t" style="left:886px;top:438.09px;font-size:13px;line-height:16px;color:#111;transform:scaleX(0.976);transform-origin:0 0;">(9)</div>
<div style="left:1070px;top:424px;width:50px;height:20px;background:#fff;border:1px solid #a9abb0;"></div>
<div style="left:1102px;top:425px;width:17px;height:18px;background:linear-gradient(#ececec,#e4e4e4);border:1px solid #a9abb0;"></div>
<svg style="left:1105.5px;top:430.0px" width="10" height="8" viewBox="0 0 10 8"><path d="M1.6 1.8 L5 5.4 L8.4 1.8" fill="none" stroke="#4e4e4e" stroke-width="2.1"/></svg>
<div class="t" style="left:1075px;top:427.09px;font-size:13px;line-height:16px;color:#120a10;transform:scaleX(0.960);transform-origin:0 0;">1</div>
<div class="t" style="left:1124px;top:427.09px;font-size:13px;line-height:16px;color:#111;">+3 (2)</div>
<div class="t" style="left:681px;top:469.09px;font-size:13px;line-height:16px;color:#111;transform:scaleX(0.971);transform-origin:0 0;">Points</div>
<div class="t" style="left:736px;top:469.09px;font-size:13px;line-height:16px;color:#111;transform:scaleX(0.960);transform-origin:0 0;">19</div>
<div class="t" style="left:831px;top:469.09px;font-size:13px;line-height:16px;color:#111;transform:scaleX(0.976);transform-origin:0 0;">Adopted</div>
<div style="left:889px;top:469px;width:14px;height:14px;background:#fff;border:1px solid #555;"></div>
<div class="t" style="left:987px;top:461.09px;font-size:13px;line-height:16px;color:#111;transform:scaleX(0.964);transform-origin:0 0;">Auto</div>
<div class="t" style="left:987px;top:477.09px;font-size:13px;line-height:16px;color:#111;transform:scaleX(0.942);transform-origin:0 0;">BaseLVL</div>
<div style="left:1074px;top:469px;width:14px;height:14px;background:#fff;border:1px solid #555;"></div>
<svg style="left:1074px;top:469px" width="14" height="14" viewBox="0 0 14 14"><path d="M3 7 L6 10.5 L11 3" fill="none" stroke="#111" stroke-width="2"/></svg>
<div style="left:1218px;top:310px;width:358px;height:24px;background:linear-gradient(#acd8ee,#93cae7 50%,#7bbde0);"></div>
<div class="t" style="left:1224px;top:313.05px;font-size:16px;line-height:20px;color:#0c0a10;transform:scaleX(0.930);transform-origin:0 0;">Extended Info</div>
<div style="left:1218px;top:334px;width:358px;height:35px;background:#a0a0a0;"></div>
<div style="left:1220px;top:364px;width:355px;height:4px;background:#e2e2e2;"></div>
<div style="left:1221px;top:339px;width:200px;height:20px;background:#fff;border:1px solid #a9abb0;"></div>
<div style="left:1403px;top:340px;width:17px;height:18px;background:linear-gradient(#ececec,#e4e4e4);border:1px solid #a9abb0;"></div>
<svg style="left:1406.5px;top:345.0px" width="10" height="8" viewBox="0 0 10 8"><path d="M1.6 1.8 L5 5.4 L8.4 1.8" fill="none" stroke="#4e4e4e" stroke-width="2.1"/></svg>
<div class="t" style="left:1226px;top:342.09px;font-size:13px;line-height:16px;color:#120a10;transform:scaleX(0.990);transform-origin:0 0;">-</div>
<div style="left:672px;top:500px;width:907px;height:60px;background:#a4a1a1;"></div>
<div style="left:674px;top:502px;width:54px;height:19px;background:#d3d3d3;"></div>
<div style="left:674px;top:523px;width:54px;height:35px;background:#e6e6e6;"></div>
<div class="t" style="left:678px;top:504.09px;font-size:13px;line-height:16px;color:#111;transform:scaleX(0.945);transform-origin:0 0;">Max HP</div>
<div class="t" style="left:678px;top:534.09px;font-size:13px;line-height:16px;color:#111;transform:scaleX(0.960);transform-origin:0 0;">11784</div>
<div style="left:730px;top:502px;width:54px;height:19px;background:#d3d3d3;"></div>
<div style="left:730px;top:523px;width:54px;height:35px;background:#e6e6e6;"></div>
<div class="t" style="left:734px;top:504.09px;font-size:13px;line-height:16px;color:#111;transform:scaleX(0.946);transform-origin:0 0;">Max SP</div>
<div class="t" style="left:734px;top:534.09px;font-size:13px;line-height:16px;color:#111;transform:scaleX(0.960);transform-origin:0 0;">880</div>
<div style="left:786px;top:502px;width:106px;height:19px;background:#d3d3d3;"></div>
<div style="left:786px;top:523px;width:106px;height:35px;background:#e6e6e6;"></div>
<div class="t" style="left:790px;top:504.09px;font-size:13px;line-height:16px;color:#111;transform:scaleX(0.910);transform-origin:0 0;">DEF</div>
<div class="t" style="left:790px;top:526.09px;font-size:13px;line-height:16px;color:#111;">94 + 0</div>
<div class="t" style="left:790px;top:542.09px;font-size:13px;line-height:16px;color:#111;transform:scaleX(0.982);transform-origin:0 0;">(0% Reduction)</div>
<div style="left:894px;top:502px;width:107px;height:19px;background:#d3d3d3;"></div>
<div style="left:894px;top:523px;width:107px;height:35px;background:#e6e6e6;"></div>
<div class="t" style="left:898px;top:504.09px;font-size:13px;line-height:16px;color:#111;transform:scaleX(0.910);transform-origin:0 0;">MDEF</div>
<div class="t" style="left:898px;top:526.09px;font-size:13px;line-height:16px;color:#111;transform:scaleX(0.994);transform-origin:0 0;">109 + 0</div>
<div class="t" style="left:898px;top:542.09px;font-size:13px;line-height:16px;color:#111;transform:scaleX(0.982);transform-origin:0 0;">(0% Reduction)</div>
<div style="left:1003px;top:502px;width:30px;height:19px;background:#d3d3d3;"></div>
<div style="left:1003px;top:523px;width:30px;height:35px;background:#e6e6e6;"></div>
<div class="t" style="left:1007px;top:504.09px;font-size:13px;line-height:16px;color:#111;transform:scaleX(0.910);transform-origin:0 0;">HIT</div>
<div class="t" style="left:1007px;top:534.09px;font-size:13px;line-height:16px;color:#111;transform:scaleX(0.960);transform-origin:0 0;">364</div>
<div style="left:1035px;top:502px;width:37px;height:19px;background:#d3d3d3;"></div>
<div style="left:1035px;top:523px;width:37px;height:35px;background:#e6e6e6;"></div>
<div class="t" style="left:1039px;top:504.09px;font-size:13px;line-height:16px;color:#111;transform:scaleX(0.910);transform-origin:0 0;">FLEE</div>
<div class="t" style="left:1039px;top:534.09px;font-size:13px;line-height:16px;color:#111;transform:scaleX(0.960);transform-origin:0 0;">208</div>
<div style="left:1074px;top:502px;width:65px;height:19px;background:#d3d3d3;"></div>
<div style="left:1074px;top:523px;width:65px;height:35px;background:#e6e6e6;"></div>
<div class="t" style="left:1078px;top:504.09px;font-size:13px;line-height:16px;color:#111;transform:scaleX(0.968);transform-origin:0 0;">P. Dodge</div>
<div class="t" style="left:1078px;top:534.09px;font-size:13px;line-height:16px;color:#111;transform:scaleX(0.960);transform-origin:0 0;">1</div>
<div style="left:1140px;top:502px;width:51px;height:19px;background:#d3d3d3;"></div>
<div style="left:1140px;top:523px;width:51px;height:35px;background:#e6e6e6;"></div>
<div class="t" style="left:1144px;top:504.09px;font-size:13px;line-height:16px;color:#111;transform:scaleX(0.971);transform-origin:0 0;">Critical</div>
<div class="t" style="left:1144px;top:534.09px;font-size:13px;line-height:16px;color:#111;transform:scaleX(0.960);transform-origin:0 0;">2</div>
<div style="left:1192px;top:502px;width:94px;height:19px;background:#d3d3d3;"></div>
<div style="left:1192px;top:523px;width:94px;height:35px;background:#e6e6e6;"></div>
<div class="t" style="left:1196px;top:504.09px;font-size:13px;line-height:16px;color:#111;transform:scaleX(0.910);transform-origin:0 0;">ATK</div>
<div class="t" style="left:1196px;top:526.09px;font-size:13px;line-height:16px;color:#111;transform:scaleX(0.994);transform-origin:0 0;">113 + 0</div>
<div class="t" style="left:1196px;top:542.09px;font-size:13px;line-height:16px;color:#111;">(226 + 0 ± 0)</div>
<div style="left:1288px;top:502px;width:94px;height:19px;background:#d3d3d3;"></div>
<div style="left:1288px;top:523px;width:94px;height:35px;background:#e6e6e6;"></div>
<div class="t" style="left:1292px;top:504.09px;font-size:13px;line-height:16px;color:#111;transform:scaleX(0.910);transform-origin:0 0;">MATK</div>
<div class="t" style="left:1292px;top:526.09px;font-size:13px;line-height:16px;color:#111;transform:scaleX(0.994);transform-origin:0 0;">118 + 0</div>
<div class="t" style="left:1292px;top:542.09px;font-size:13px;line-height:16px;color:#111;">(118 + 0 ± 0)</div>
<div style="left:1384px;top:502px;width:50px;height:19px;background:#d3d3d3;"></div>
<div style="left:1384px;top:523px;width:50px;height:35px;background:#e6e6e6;"></div>
<div class="t" style="left:1388px;top:504.09px;font-size:13px;line-height:16px;color:#111;transform:scaleX(0.910);transform-origin:0 0;">ASPD</div>
<div class="t" style="left:1388px;top:534.09px;font-size:13px;line-height:16px;color:#111;transform:scaleX(0.963);transform-origin:0 0;">162.67</div>
<div style="left:1436px;top:502px;width:69px;height:19px;background:#d3d3d3;"></div>
<div style="left:1436px;top:523px;width:69px;height:35px;background:#e6e6e6;"></div>
<div class="t" style="left:1440px;top:504.09px;font-size:13px;line-height:16px;color:#111;transform:scaleX(0.958);transform-origin:0 0;">HP Regen</div>
<div class="t" style="left:1440px;top:534.09px;font-size:13px;line-height:16px;color:#111;transform:scaleX(0.960);transform-origin:0 0;">75</div>
<div style="left:1507px;top:502px;width:70px;height:19px;background:#d3d3d3;"></div>
<div style="left:1507px;top:523px;width:70px;height:35px;background:#e6e6e6;"></div>
<div class="t" style="left:1511px;top:504.09px;font-size:13px;line-height:16px;color:#111;transform:scaleX(0.958);transform-origin:0 0;">SP Regen</div>
<div class="t" style="left:1511px;top:534.09px;font-size:13px;line-height:16px;color:#111;transform:scaleX(0.960);transform-origin:0 0;">17</div>
<div style="left:672px;top:561px;width:907px;height:49px;background:#56abda;"></div>
<div style="left:672px;top:561px;width:907px;height:25px;background:linear-gradient(#acd8ee,#93cae7 50%,#7bbde0);"></div>
<div class="t" style="left:678px;top:565.05px;font-size:16px;line-height:20px;color:#0c0a10;transform:scaleX(0.930);transform-origin:0 0;">Equipment</div>
<div style="left:674px;top:588px;width:903px;height:20px;background:#b8dcee;"></div>
<div class="t" style="left:678px;top:591.09px;font-size:13px;line-height:16px;color:#120a10;transform:scaleX(0.993);transform-origin:0 0;">The weapons, armor, and accessories you wear.</div>
<div style="left:675px;top:612px;width:272px;height:25px;background:linear-gradient(#acd8ee,#93cae7 50%,#7bbde0);"></div>
<div class="t" style="left:681px;top:617.05px;font-size:16px;line-height:20px;color:#0c0a10;transform:scaleX(0.930);transform-origin:0 0;">Main Weapon (right)</div>
<div style="left:675px;top:637px;width:272px;height:200px;background:#a4a1a1;"></div>
<div style="left:677px;top:639px;width:60px;height:36px;background:#d3d3d3;"></div>
<div style="left:739px;top:639px;width:206px;height:36px;background:#e6e6e6;"></div>
<div style="left:677px;top:677px;width:60px;height:36px;background:#c8c8c8;"></div>
<div style="left:739px;top:677px;width:206px;height:36px;background:#dadada;"></div>
<div style="left:677px;top:715px;width:60px;height:44px;background:#d3d3d3;"></div>
<div style="left:739px;top:715px;width:206px;height:44px;background:#e6e6e6;"></div>
<div style="left:677px;top:761px;width:60px;height:28px;background:#c8c8c8;"></div>
<div style="left:739px;top:761px;width:206px;height:28px;background:#dadada;"></div>
<div style="left:677px;top:791px;width:60px;height:28px;background:#d3d3d3;"></div>
<div style="left:739px;top:791px;width:206px;height:28px;background:#e6e6e6;"></div>
<div style="left:677px;top:821px;width:60px;height:29px;background:#c8c8c8;"></div>
<div style="left:739px;top:821px;width:206px;height:29px;background:#dadada;"></div>
<div class="t" style="left:681px;top:642.09px;font-size:13px;line-height:16px;color:#111;transform:scaleX(0.970);transform-origin:0 0;">Weapon</div>
<div class="t" style="left:681px;top:658.09px;font-size:13px;line-height:16px;color:#111;transform:scaleX(0.968);transform-origin:0 0;">Type</div>
<div style="left:743px;top:647px;width:200px;height:20px;background:#fff;border:1px solid #a9abb0;"></div>
<div style="left:925px;top:648px;width:17px;height:18px;background:linear-gradient(#ececec,#e4e4e4);border:1px solid #a9abb0;"></div>
<svg style="left:928.5px;top:653.0px" width="10" height="8" viewBox="0 0 10 8"><path d="M1.6 1.8 L5 5.4 L8.4 1.8" fill="none" stroke="#4e4e4e" stroke-width="2.1"/></svg>
<div class="t" style="left:748px;top:650.09px;font-size:13px;line-height:16px;color:#120a10;transform:scaleX(0.976);transform-origin:0 0;">Unarmed</div>
<div class="t" style="left:681px;top:680.09px;font-size:13px;line-height:16px;color:#111;transform:scaleX(0.963);transform-origin:0 0;">Card</div>
<div class="t" style="left:681px;top:696.09px;font-size:13px;line-height:16px;color:#111;transform:scaleX(0.977);transform-origin:0 0;">Shortcuts</div>
<div style="left:743px;top:685px;width:200px;height:20px;background:#fff;border:1px solid #a9abb0;"></div>
<div style="left:925px;top:686px;width:17px;height:18px;background:linear-gradient(#ececec,#e4e4e4);border:1px solid #a9abb0;"></div>
<svg style="left:928.5px;top:691.0px" width="10" height="8" viewBox="0 0 10 8"><path d="M1.6 1.8 L5 5.4 L8.4 1.8" fill="none" stroke="#4e4e4e" stroke-width="2.1"/></svg>
<div class="t" style="left:748px;top:688.09px;font-size:13px;line-height:16px;color:#120a10;transform:scaleX(0.976);transform-origin:0 0;">Card Shortcuts</div>
<div class="t" style="left:681px;top:718.09px;font-size:13px;line-height:16px;color:#111;transform:scaleX(0.968);transform-origin:0 0;">Name</div>
<div style="left:743px;top:727px;width:200px;height:20px;background:#fff;border:1px solid #a9abb0;"></div>
<div style="left:925px;top:728px;width:17px;height:18px;background:linear-gradient(#ececec,#e4e4e4);border:1px solid #a9abb0;"></div>
<svg style="left:928.5px;top:733.0px" width="10" height="8" viewBox="0 0 10 8"><path d="M1.6 1.8 L5 5.4 L8.4 1.8" fill="none" stroke="#4e4e4e" stroke-width="2.1"/></svg>
<div class="t" style="left:748px;top:730.09px;font-size:13px;line-height:16px;color:#120a10;transform:scaleX(0.978);transform-origin:0 0;">(Unarmed)</div>
<div class="t" style="left:681px;top:768.09px;font-size:13px;line-height:16px;color:#111;transform:scaleX(0.972);transform-origin:0 0;">Card 1</div>
<div style="left:743px;top:765px;width:200px;height:20px;background:#fff;border:1px solid #a9abb0;"></div>
<div style="left:925px;top:766px;width:17px;height:18px;background:linear-gradient(#ececec,#e4e4e4);border:1px solid #a9abb0;"></div>
<svg style="left:928.5px;top:771.0px" width="10" height="8" viewBox="0 0 10 8"><path d="M1.6 1.8 L5 5.4 L8.4 1.8" fill="none" stroke="#4e4e4e" stroke-width="2.1"/></svg>
<div class="t" style="left:748px;top:768.09px;font-size:13px;line-height:16px;color:#120a10;transform:scaleX(0.968);transform-origin:0 0;">(No Card)</div>
<div class="t" style="left:681px;top:798.09px;font-size:13px;line-height:16px;color:#111;transform:scaleX(0.972);transform-origin:0 0;">Card 2</div>
<div style="left:743px;top:795px;width:200px;height:20px;background:#fff;border:1px solid #a9abb0;"></div>
<div style="left:925px;top:796px;width:17px;height:18px;background:linear-gradient(#ececec,#e4e4e4);border:1px solid #a9abb0;"></div>
<svg style="left:928.5px;top:801.0px" width="10" height="8" viewBox="0 0 10 8"><path d="M1.6 1.8 L5 5.4 L8.4 1.8" fill="none" stroke="#4e4e4e" stroke-width="2.1"/></svg>
<div class="t" style="left:748px;top:798.09px;font-size:13px;line-height:16px;color:#120a10;transform:scaleX(0.968);transform-origin:0 0;">(No Card)</div>
<div style="left:951px;top:612px;width:650px;height:25px;background:linear-gradient(#acd8ee,#93cae7 50%,#7bbde0);"></div>
<div class="t" style="left:957px;top:617.05px;font-size:16px;line-height:20px;color:#0c0a10;transform:scaleX(0.930);transform-origin:0 0;">Armor</div>
<div style="left:951px;top:637px;width:650px;height:200px;background:#a4a1a1;"></div>
<div style="left:953px;top:639px;width:273px;height:28px;background:#e6e6e6;"></div>
<div style="left:1228px;top:639px;width:220px;height:28px;background:#d3d3d3;"></div>
<div style="left:1450px;top:639px;width:160px;height:28px;background:#e6e6e6;"></div>
<div style="left:953px;top:669px;width:273px;height:28px;background:#dadada;"></div>
<div style="left:1228px;top:669px;width:220px;height:28px;background:#c8c8c8;"></div>
<div style="left:1450px;top:669px;width:160px;height:28px;background:#dadada;"></div>
<div style="left:953px;top:699px;width:273px;height:28px;background:#e6e6e6;"></div>
<div style="left:1228px;top:699px;width:220px;height:28px;background:#d3d3d3;"></div>
<div style="left:1450px;top:699px;width:160px;height:28px;background:#e6e6e6;"></div>
<div style="left:953px;top:729px;width:273px;height:28px;background:#dadada;"></div>
<div style="left:1228px;top:729px;width:220px;height:28px;background:#c8c8c8;"></div>
<div style="left:1450px;top:729px;width:160px;height:28px;background:#dadada;"></div>
<div style="left:953px;top:759px;width:273px;height:28px;background:#e6e6e6;"></div>
<div style="left:1228px;top:759px;width:220px;height:28px;background:#d3d3d3;"></div>
<div style="left:1450px;top:759px;width:160px;height:28px;background:#e6e6e6;"></div>
<div style="left:953px;top:789px;width:273px;height:28px;background:#dadada;"></div>
<div style="left:1228px;top:789px;width:220px;height:28px;background:#c8c8c8;"></div>
<div style="left:1450px;top:789px;width:160px;height:28px;background:#dadada;"></div>
<div style="left:953px;top:819px;width:273px;height:31px;background:#e6e6e6;"></div>
<div style="left:1228px;top:819px;width:220px;height:31px;background:#d3d3d3;"></div>
<div style="left:1450px;top:819px;width:160px;height:31px;background:#e6e6e6;"></div>
<div style="left:1024px;top:643px;width:200px;height:20px;background:#fff;border:1px solid #a9abb0;"></div>
<div style="left:1206px;top:644px;width:17px;height:18px;background:linear-gradient(#ececec,#e4e4e4);border:1px solid #a9abb0;"></div>
<svg style="left:1209.5px;top:649.0px" width="10" height="8" viewBox="0 0 10 8"><path d="M1.6 1.8 L5 5.4 L8.4 1.8" fill="none" stroke="#4e4e4e" stroke-width="2.1"/></svg>
<div class="t" style="left:1029px;top:646.09px;font-size:13px;line-height:16px;color:#120a10;transform:scaleX(0.975);transform-origin:0 0;">Set Shortcuts</div>
<div style="left:957px;top:673px;width:50px;height:20px;background:#fff;border:1px solid #a9abb0;"></div>
<div style="left:989px;top:674px;width:17px;height:18px;background:linear-gradient(#ececec,#e4e4e4);border:1px solid #a9abb0;"></div>
<svg style="left:992.5px;top:679.0px" width="10" height="8" viewBox="0 0 10 8"><path d="M1.6 1.8 L5 5.4 L8.4 1.8" fill="none" stroke="#4e4e4e" stroke-width="2.1"/></svg>
<div class="t" style="left:962px;top:676.09px;font-size:13px;line-height:16px;color:#120a10;transform:scaleX(1.011);transform-origin:0 0;">+0</div>
<div style="left:957px;top:763px;width:50px;height:20px;background:#fff;border:1px solid #a9abb0;"></div>
<div style="left:989px;top:764px;width:17px;height:18px;background:linear-gradient(#ececec,#e4e4e4);border:1px solid #a9abb0;"></div>
<svg style="left:992.5px;top:769.0px" width="10" height="8" viewBox="0 0 10 8"><path d="M1.6 1.8 L5 5.4 L8.4 1.8" fill="none" stroke="#4e4e4e" stroke-width="2.1"/></svg>
<div class="t" style="left:962px;top:766.09px;font-size:13px;line-height:16px;color:#120a10;transform:scaleX(1.011);transform-origin:0 0;">+0</div>
<div style="left:957px;top:793px;width:50px;height:20px;background:#fff;border:1px solid #a9abb0;"></div>
<div style="left:989px;top:794px;width:17px;height:18px;background:linear-gradient(#ececec,#e4e4e4);border:1px solid #a9abb0;"></div>
<svg style="left:992.5px;top:799.0px" width="10" height="8" viewBox="0 0 10 8"><path d="M1.6 1.8 L5 5.4 L8.4 1.8" fill="none" stroke="#4e4e4e" stroke-width="2.1"/></svg>
<div class="t" style="left:962px;top:796.09px;font-size:13px;line-height:16px;color:#120a10;transform:scaleX(1.011);transform-origin:0 0;">+0</div>
<div style="left:1024px;top:673px;width:200px;height:20px;background:#fff;border:1px solid #a9abb0;"></div>
<div style="left:1206px;top:674px;width:17px;height:18px;background:linear-gradient(#ececec,#e4e4e4);border:1px solid #a9abb0;"></div>
<svg style="left:1209.5px;top:679.0px" width="10" height="8" viewBox="0 0 10 8"><path d="M1.6 1.8 L5 5.4 L8.4 1.8" fill="none" stroke="#4e4e4e" stroke-width="2.1"/></svg>
<div class="t" style="left:1029px;top:676.09px;font-size:13px;line-height:16px;color:#120a10;transform:scaleX(0.976);transform-origin:0 0;">(No Upper Headgear)</div>
<div style="left:1024px;top:703px;width:200px;height:20px;background:#fff;border:1px solid #a9abb0;"></div>
<div style="left:1206px;top:704px;width:17px;height:18px;background:linear-gradient(#ececec,#e4e4e4);border:1px solid #a9abb0;"></div>
<svg style="left:1209.5px;top:709.0px" width="10" height="8" viewBox="0 0 10 8"><path d="M1.6 1.8 L5 5.4 L8.4 1.8" fill="none" stroke="#4e4e4e" stroke-width="2.1"/></svg>
<div class="t" style="left:1029px;top:706.09px;font-size:13px;line-height:16px;color:#120a10;transform:scaleX(0.975);transform-origin:0 0;">(No Middle Headgear)</div>
<div style="left:1024px;top:733px;width:200px;height:20px;background:#fff;border:1px solid #a9abb0;"></div>
<div style="left:1206px;top:734px;width:17px;height:18px;background:linear-gradient(#ececec,#e4e4e4);border:1px solid #a9abb0;"></div>
<svg style="left:1209.5px;top:739.0px" width="10" height="8" viewBox="0 0 10 8"><path d="M1.6 1.8 L5 5.4 L8.4 1.8" fill="none" stroke="#4e4e4e" stroke-width="2.1"/></svg>
<div class="t" style="left:1029px;top:736.09px;font-size:13px;line-height:16px;color:#120a10;transform:scaleX(0.977);transform-origin:0 0;">(No Lower Headgear)</div>
<div style="left:1024px;top:763px;width:200px;height:20px;background:#fff;border:1px solid #a9abb0;"></div>
<div style="left:1206px;top:764px;width:17px;height:18px;background:linear-gradient(#ececec,#e4e4e4);border:1px solid #a9abb0;"></div>
<svg style="left:1209.5px;top:769.0px" width="10" height="8" viewBox="0 0 10 8"><path d="M1.6 1.8 L5 5.4 L8.4 1.8" fill="none" stroke="#4e4e4e" stroke-width="2.1"/></svg>
<div class="t" style="left:1029px;top:766.09px;font-size:13px;line-height:16px;color:#120a10;transform:scaleX(0.971);transform-origin:0 0;">(No Armor)</div>
<div style="left:1024px;top:793px;width:200px;height:20px;background:#fff;border:1px solid #a9abb0;"></div>
<div style="left:1206px;top:794px;width:17px;height:18px;background:linear-gradient(#ececec,#e4e4e4);border:1px solid #a9abb0;"></div>
<svg style="left:1209.5px;top:799.0px" width="10" height="8" viewBox="0 0 10 8"><path d="M1.6 1.8 L5 5.4 L8.4 1.8" fill="none" stroke="#4e4e4e" stroke-width="2.1"/></svg>
<div class="t" style="left:1029px;top:796.09px;font-size:13px;line-height:16px;color:#120a10;transform:scaleX(0.972);transform-origin:0 0;">(No Shield)</div>
<div style="left:1232px;top:673px;width:200px;height:20px;background:#fff;border:1px solid #a9abb0;"></div>
<div style="left:1414px;top:674px;width:17px;height:18px;background:linear-gradient(#ececec,#e4e4e4);border:1px solid #a9abb0;"></div>
<svg style="left:1417.5px;top:679.0px" width="10" height="8" viewBox="0 0 10 8"><path d="M1.6 1.8 L5 5.4 L8.4 1.8" fill="none" stroke="#4e4e4e" stroke-width="2.1"/></svg>
<div class="t" style="left:1237px;top:676.09px;font-size:13px;line-height:16px;color:#120a10;transform:scaleX(0.968);transform-origin:0 0;">(No Card)</div>
<div style="left:1232px;top:703px;width:200px;height:20px;background:#fff;border:1px solid #a9abb0;"></div>
<div style="left:1414px;top:704px;width:17px;height:18px;background:linear-gradient(#ececec,#e4e4e4);border:1px solid #a9abb0;"></div>
<svg style="left:1417.5px;top:709.0px" width="10" height="8" viewBox="0 0 10 8"><path d="M1.6 1.8 L5 5.4 L8.4 1.8" fill="none" stroke="#4e4e4e" stroke-width="2.1"/></svg>
<div class="t" style="left:1237px;top:706.09px;font-size:13px;line-height:16px;color:#120a10;transform:scaleX(0.968);transform-origin:0 0;">(No Card)</div>
<div style="left:1232px;top:763px;width:200px;height:20px;background:#fff;border:1px solid #a9abb0;"></div>
<div style="left:1414px;top:764px;width:17px;height:18px;background:linear-gradient(#ececec,#e4e4e4);border:1px solid #a9abb0;"></div>
<svg style="left:1417.5px;top:769.0px" width="10" height="8" viewBox="0 0 10 8"><path d="M1.6 1.8 L5 5.4 L8.4 1.8" fill="none" stroke="#4e4e4e" stroke-width="2.1"/></svg>
<div class="t" style="left:1237px;top:766.09px;font-size:13px;line-height:16px;color:#120a10;transform:scaleX(0.968);transform-origin:0 0;">(No Card)</div>
<div style="left:1232px;top:793px;width:200px;height:20px;background:#fff;border:1px solid #a9abb0;"></div>
<div style="left:1414px;top:794px;width:17px;height:18px;background:linear-gradient(#ececec,#e4e4e4);border:1px solid #a9abb0;"></div>
<svg style="left:1417.5px;top:799.0px" width="10" height="8" viewBox="0 0 10 8"><path d="M1.6 1.8 L5 5.4 L8.4 1.8" fill="none" stroke="#4e4e4e" stroke-width="2.1"/></svg>
<div class="t" style="left:1237px;top:796.09px;font-size:13px;line-height:16px;color:#120a10;transform:scaleX(0.968);transform-origin:0 0;">(No Card)</div>
<div style="left:1454px;top:673px;width:160px;height:20px;background:#fff;border:1px solid #b4b4b4;"></div>
<div class="t" style="left:1460px;top:676.09px;font-size:13px;line-height:16px;color:#111;transform:scaleX(0.980);transform-origin:0 0;">(Headgear Enchant)</div>
<div style="left:1454px;top:763px;width:160px;height:20px;background:#fff;border:1px solid #b4b4b4;"></div>
<div class="t" style="left:1460px;top:766.09px;font-size:13px;line-height:16px;color:#111;transform:scaleX(0.978);transform-origin:0 0;">(Armor Enchant)</div>
</div>
<div style="left:1583px;top:103px;width:1px;height:719px;background:#fff;"></div>
<div style="left:1584px;top:103px;width:15px;height:719px;background:#f0f0f0;"></div>
<div style="left:1584px;top:171px;width:15px;height:372px;background:#cdcdcd;"></div>
<svg style="left:1586px;top:108px" width="11" height="8" viewBox="0 0 11 8"><path d="M1.5 6.5 L5.5 2.5 L9.5 6.5" fill="none" stroke="#555" stroke-width="2"/></svg>
<svg style="left:1586px;top:810px" width="11" height="8" viewBox="0 0 11 8"><path d="M1.5 1.5 L5.5 5.5 L9.5 1.5" fill="none" stroke="#555" stroke-width="2"/></svg>
<div style="left:668px;top:822px;width:931px;height:17px;background:#fff;"></div>
<div style="left:668px;top:823px;width:17px;height:15px;background:#f0f0f0;"></div>
<div style="left:685px;top:823px;width:845px;height:15px;background:#cdcdcd;"></div>
<div style="left:1530px;top:823px;width:53px;height:15px;background:#f0f0f0;"></div>
<svg style="left:672px;top:826px" width="8" height="10" viewBox="0 0 8 10"><path d="M6 1 L2 5 L6 9" fill="none" stroke="#555" stroke-width="2"/></svg>
<svg style="left:1572px;top:826px" width="8" height="10" viewBox="0 0 8 10"><path d="M2 1 L6 5 L2 9" fill="none" stroke="#555" stroke-width="2"/></svg>
</body></html>
